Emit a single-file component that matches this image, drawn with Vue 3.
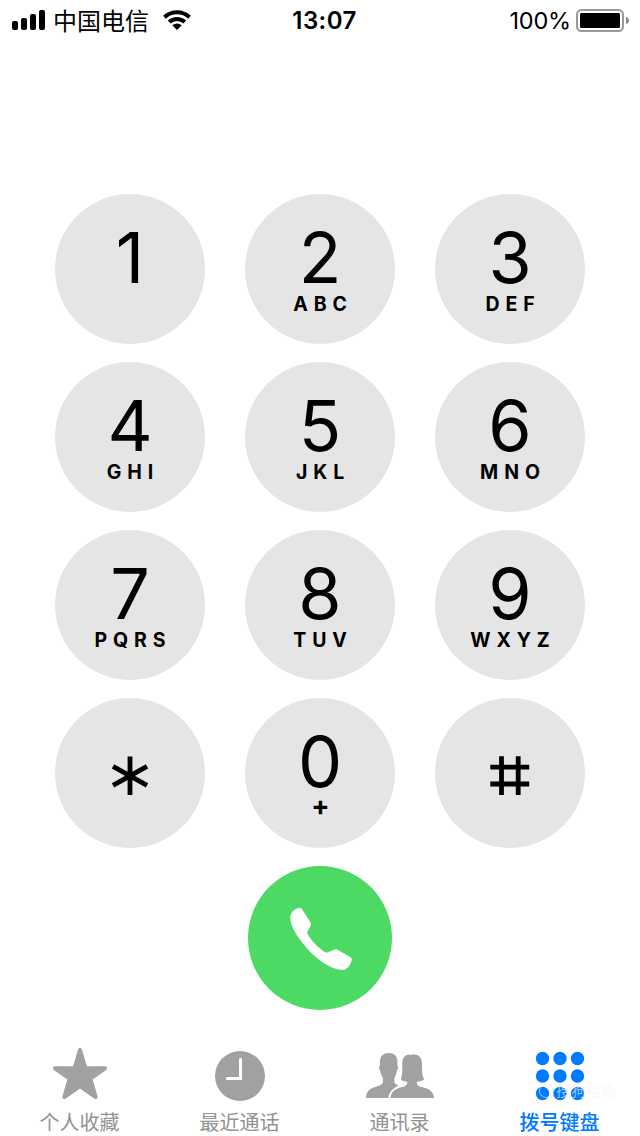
<template>
  <div class="phone">
    <header class="status">
      <div class="status-left">
        <svg class="signal" viewBox="0 0 34 20">
          <rect x="0" y="11" width="6" height="9" rx="2" />
          <rect x="9" y="8" width="6" height="12" rx="2" />
          <rect x="18" y="4" width="6" height="16" rx="2" />
          <rect x="27" y="0" width="6" height="20" rx="2" />
        </svg>
        <span class="carrier">中国电信</span>
        <svg class="wifi" viewBox="0 0 28 20">
          <path d="M1.5 7.2 A18.2 18.2 0 0 1 26.5 7.2" />
          <path d="M6.2 12 A11.4 11.4 0 0 1 21.8 12" />
          <path class="wifi-dot" d="M9.3 15.2 Q14 11.6 18.7 15.2 L14 20 Z" />
        </svg>
      </div>
      <div class="time">13:07</div>
      <div class="status-right">
        <span class="percent">100%</span>
        <svg class="battery" viewBox="0 0 54 24">
          <rect class="shell" x="1" y="1" width="46" height="21" rx="4.5" />
          <rect x="4" y="4" width="40" height="15" rx="1.5" />
          <path class="cap" d="M50 8 Q53 9 53 11.5 Q53 14 50 15 Z" />
        </svg>
      </div>
    </header>

    <main class="dialer">
      <div class="keypad">
        <button v-for="key in keys" :key="key.main" class="key" :aria-label="key.main">
          <svg v-if="key.main === '*'" class="symbol" viewBox="0 0 40 40">
            <path d="M20 0.5 V39 M3 10.3 L37 29.3 M3 29.3 L37 10.3" />
          </svg>
          <svg v-else-if="key.main === '#'" class="symbol" viewBox="0 0 40 40">
            <path d="M11.5 0.3 V39 M28.2 0.3 V39 M0.3 11.2 H39.2 M0.3 28 H39.2" />
          </svg>
          <template v-else>
            <span class="digit">{{ key.main }}</span>
            <span class="letters" :class="{ plus: key.sub === '+' }">{{ key.sub }}</span>
          </template>
        </button>
      </div>
      <button class="call" aria-label="call">
        <svg viewBox="9 12 432 432">
          <path d="M158 139 Q166 135 171 141 L196 181 Q199 186 197 191 L188 208 Q185 213 188 217 C203 241 219 256 239 270 Q243 273 249 271 L266 263 Q272 260 278 263 L317 286 Q322 289 320 295 C316 308 309 320 299 323 C270 328 228 302 200 274 C168 240 134 196 136 165 C137 152 147 143 158 139 Z" />
        </svg>
      </button>
    </main>

    <nav class="tabs">
      <div class="tab">
        <svg viewBox="60 18 240 180">
          <path class="star" d="M180 42 L196 97 H255 L211 128 L227 183 L180 150 L133 183 L149 128 L105 97 H164 Z" />
        </svg>
        <span>个人收藏</span>
      </div>
      <div class="tab">
        <svg viewBox="60 18 240 180">
          <circle cx="180" cy="120" r="75" />
          <path class="hands" d="M181.5 70 V127.5 H142" />
        </svg>
        <span>最近通话</span>
      </div>
      <div class="tab">
        <svg viewBox="60 18 240 180">
          <path d="M78 186 C78 169 88 159 103 154 C116 149 128 147 129 138 V126 C124 120 122 113 121 105 C117 100 116 92 120 86 C117 64 127 51 146 51 C166 51 175 64 172 86 C176 91 174 100 170 105 C169 113 167 120 163 126 V138 C163 143 169 146 176 148 C159 158 147 168 145 186 Z" />
          <path d="M151 186 C153 168 166 159 183 154 C195 151 202 148 202 137 C193 137 186 135 182 129 C189 117 186 96 187 79 C188 62 199 54 213 57 C235 51 246 64 246 84 C247 104 245 119 253 129 C248 135 240 137 230 137 C230 148 236 151 249 154 C268 159 281 168 282 186 Z" />
        </svg>
        <span>通讯录</span>
      </div>
      <div class="tab active">
        <svg viewBox="60 18 240 180">
          <circle v-for="n in 9" :key="n" :cx="127.5 + ((n - 1) % 3) * 52.5" :cy="67.5 + Math.floor((n - 1) / 3) * 52.5" r="20" />
        </svg>
        <span>拨号键盘</span>
        <div class="mark"><i></i>搜狗指南</div>
      </div>
    </nav>
  </div>
</template>

<script setup>
const keys = [
  { main: '1', sub: '' },
  { main: '2', sub: 'ABC' },
  { main: '3', sub: 'DEF' },
  { main: '4', sub: 'GHI' },
  { main: '5', sub: 'JKL' },
  { main: '6', sub: 'MNO' },
  { main: '7', sub: 'PQRS' },
  { main: '8', sub: 'TUV' },
  { main: '9', sub: 'WXYZ' },
  { main: '*', sub: '' },
  { main: '0', sub: '+' },
  { main: '#', sub: '' }
];
</script>

<style>
body {
  margin: 0;
  background: #fff;
}
</style>

<style scoped>
.phone {
  width: 640px;
  height: 1136px;
  display: flex;
  flex-direction: column;
  overflow: hidden;
  background: #fff;
  color: #000;
  font-family: Inter, 'Noto Sans CJK SC', sans-serif;
}
svg {
  display: block;
}
button {
  border: 0;
  padding: 0;
  font: inherit;
  color: inherit;
}
.status {
  height: 40px;
  padding: 0 10px 0 12px;
  display: grid;
  grid-template-columns: 1fr auto 1fr;
  grid-template-rows: 40px;
  align-items: center;
  font-size: 24px;
  line-height: 36px;
}
.status-left,
.status-right {
  height: 40px;
  display: flex;
  align-items: center;
}
.status-right {
  justify-content: flex-end;
}
.signal {
  width: 34px;
  height: 20px;
}
.carrier {
  margin-left: 7px;
  padding-top: 3px;
  white-space: nowrap;
}
.wifi {
  width: 28px;
  height: 20px;
  margin-left: 14px;
}
.wifi path {
  fill: none;
  stroke: #000;
  stroke-width: 4;
}
.wifi .wifi-dot {
  fill: #000;
  stroke: none;
}
.time {
  font-weight: 600;
  letter-spacing: 0.4px;
  padding: 2px 0 0 7px;
}
.percent {
  font-size: 23.5px;
  letter-spacing: -0.2px;
  padding-top: 2px;
}
.battery {
  width: 54px;
  height: 24px;
  margin: 2px 0 0 5px;
}
.shell {
  fill: none;
  stroke: #999;
  stroke-width: 2;
}
.cap {
  fill: #888;
}
.dialer {
  padding-top: 154px;
  display: flex;
  flex-direction: column;
  align-items: center;
  gap: 18px;
}
.keypad {
  display: grid;
  grid-template-columns: repeat(3, 150px);
  grid-auto-rows: 150px;
  gap: 18px 40px;
}
.key {
  border-radius: 50%;
  background: #e5e5e5;
  display: flex;
  flex-direction: column;
  align-items: center;
}
.digit {
  margin-top: 28px;
  height: 71px;
  font-size: 70px;
  line-height: 71px;
}
.letters {
  height: 22px;
  font-size: 19.5px;
  font-weight: 700;
  line-height: 22px;
  letter-spacing: 5.9px;
  padding-left: 6px;
}
.plus {
  font-size: 27px;
  line-height: 18px;
  letter-spacing: 0;
  padding-left: 1px;
}
.symbol {
  width: 40px;
  height: 40px;
  margin-top: 58px;
  fill: none;
  stroke: #000;
  stroke-width: 4.8;
}
.call {
  width: 144px;
  height: 144px;
  border-radius: 50%;
  background: #4cd964;
}
.call svg {
  width: 144px;
  height: 144px;
  fill: #fff;
}
.tabs {
  margin-top: 32px;
  display: grid;
  grid-template-columns: repeat(4, 160px);
}
.tab {
  position: relative;
  display: flex;
  flex-direction: column;
  align-items: center;
  color: #929292;
  fill: #a1a1a1;
  font-size: 20px;
  line-height: 42px;
}
.tab svg {
  width: 80px;
  height: 60px;
}
.tab span {
  margin-right: 1px;
}
.tab.active {
  color: #007aff;
  fill: #007aff;
}
.active span {
  font-weight: 500;
}
.star {
  stroke: #a1a1a1;
  stroke-width: 12;
  stroke-linejoin: round;
}
.hands {
  fill: none;
  stroke: #fff;
  stroke-width: 9;
  stroke-linecap: round;
}
.mark {
  position: absolute;
  left: 59px;
  top: 39px;
  display: flex;
  align-items: center;
  gap: 3px;
  font-size: 15px;
  line-height: 20px;
  color: rgba(255, 255, 255, 0.6);
  text-shadow: 0 0 1px rgba(0, 0, 0, 0.06);
}
.mark i {
  width: 12px;
  height: 12px;
  border: 1px solid rgba(255, 255, 255, 0.6);
  border-radius: 50%;
}
</style>
